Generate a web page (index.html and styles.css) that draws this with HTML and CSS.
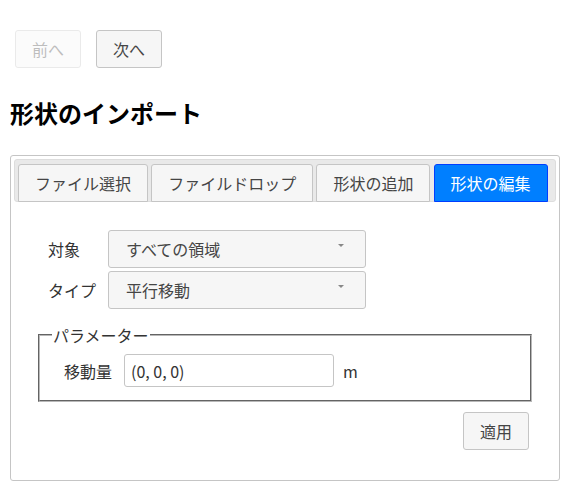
FILE: index.html
```html
<!DOCTYPE html>
<html lang="ja">
<head>
<meta charset="utf-8">
<title>形状のインポート</title>
<link rel="stylesheet" href="styles.css">
</head>
<body>
<div class="page">
  <div class="nav">
    <button class="btn btn-disabled" disabled>前へ</button>
    <button class="btn">次へ</button>
  </div>
  <h2 class="title">形状のインポート</h2>
  <div class="tabs">
    <ul class="tab-nav">
      <li class="tab">ファイル選択</li>
      <li class="tab">ファイルドロップ</li>
      <li class="tab">形状の追加</li>
      <li class="tab tab-active">形状の編集</li>
    </ul>
    <div class="tab-panel">
      <div class="form-grid">
        <span class="form-label">対象</span>
        <div class="select"><span class="select-text">すべての領域</span><span class="caret"></span></div>
        <span class="form-label">タイプ</span>
        <div class="select"><span class="select-text">平行移動</span><span class="caret"></span></div>
      </div>
      <fieldset class="params">
        <legend class="params-legend">パラメーター</legend>
        <div class="param-row">
          <span class="param-label">移動量</span>
          <input class="text-input" type="text" value="(0, 0, 0)">
          <span class="unit">m</span>
        </div>
      </fieldset>
      <div class="actions">
        <button class="btn">適用</button>
      </div>
    </div>
  </div>
</div>
</body>
</html>
```
FILE: styles.css
```css
html, body {
  margin: 0;
  padding: 0;
  background: #fff;
}
body {
  font-family: "Noto Sans CJK JP", "Noto Sans", sans-serif;
  font-size: 16px;
  line-height: 20px;
  color: #333;
}
.page {
  padding: 0 10px;
}
.nav {
  display: flex;
  gap: 15px;
  padding: 30px 0 0 5px;
}
.btn {
  font-family: inherit;
  font-size: 16px;
  line-height: 20px;
  padding: 8px 16px;
  border: 1px solid #c5c5c5;
  border-radius: 3px;
  background: #f6f6f6;
  color: #454545;
  margin: 0;
}
.btn-disabled {
  opacity: 0.35;
}
.title {
  margin: 30px 0 0 0;
  font-size: 24px;
  line-height: 30px;
  font-weight: bold;
  color: #000;
}
.tabs {
  margin-top: 27px;
  border: 1px solid #c5c5c5;
  border-radius: 3px;
  padding: 3px;
  background: #fff;
}
.tab-nav {
  list-style: none;
  margin: 0;
  padding: 3px 3px 0 3px;
  display: flex;
  border: 1px solid #dddddd;
  border-radius: 3px;
  background: #e9e9e9;
}
.tab {
  margin: 1px 3.2px -1px 0;
  padding: 8px 16px;
  border: 1px solid #c5c5c5;
  border-radius: 3px 3px 0 0;
  background: #f6f6f6;
  color: #454545;
  white-space: nowrap;
}
.tab-active {
  background: #007fff;
  border-color: #003eff;
  color: #fff;
}
.tab-panel {
  padding: 16px 22px 27px 22px;
}
.form-grid {
  display: grid;
  grid-template-columns: 60px 258px;
  row-gap: 3px;
  align-items: center;
  padding: 12px 0 0 12px;
}
.form-label {
  color: #333;
}
.select {
  display: flex;
  align-items: center;
  justify-content: space-between;
  height: 20px;
  padding: 8px 21px 8px 17px;
  border: 1px solid #c5c5c5;
  border-radius: 3px;
  background: #f6f6f6;
  color: #454545;
}
.caret {
  width: 0;
  height: 0;
  border-left: 3.5px solid transparent;
  border-right: 3.5px solid transparent;
  border-top: 3.5px solid #888;
  margin-top: -7px;
}
.params {
  margin: 16px 2px 0 2px;
  padding: 4px 12px 10px 12px;
  border: 2px groove #b8b8b8;
}
.params-legend {
  padding: 0 1px;
  color: #333;
}
.param-row {
  display: flex;
  align-items: center;
  padding-left: 12px;
  margin: 5px 0 3px 0;
}
.param-label {
  width: 48px;
  margin-right: 12px;
}
.text-input {
  box-sizing: border-box;
  width: 210px;
  height: 33px;
  margin: 0 9px 0 0;
  padding: 0 6px;
  border: 1px solid #c5c5c5;
  border-radius: 3px;
  font-family: inherit;
  font-size: 16px;
  color: #333;
  background: #fff;
}
.unit {
  color: #333;
}
.actions {
  display: flex;
  justify-content: flex-end;
  margin: 10px 5px 0 0;
}
```
